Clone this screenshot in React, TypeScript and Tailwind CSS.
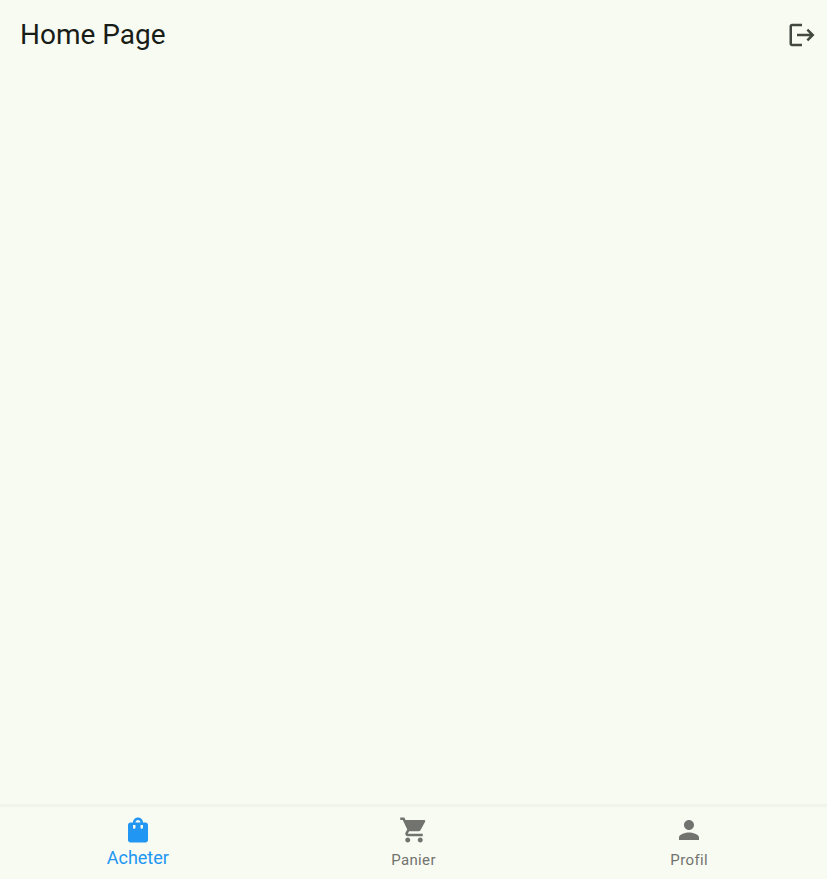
import React from "react";

type Tab = { id: string; label: string; path: string };

const tabs: Tab[] = [
  {
    id: "acheter",
    label: "Acheter",
    path: "M18 6h-2c0-2.210-1.790-4-4-4S8 3.790 8 6H6c-1.100 0-2 .9-2 2v12c0 1.100.9 2 2 2h12c1.100 0 2-.9 2-2V8c0-1.100-.9-2-2-2zm-8 4c0 .55-.45 1-1 1s-1-.45-1-1V8h2v2zm2-6c1.100 0 2 .9 2 2h-4c0-1.100.9-2 2-2zm4 6c0 .55-.45 1-1 1s-1-.45-1-1V8h2v2z",
  },
  {
    id: "panier",
    label: "Panier",
    path: "M7 18c-1.100 0-1.990.9-1.990 2S5.900 22 7 22s2-.9 2-2-.9-2-2-2zM1 2v2h2l3.600 7.590-1.350 2.450c-.16.28-.25.61-.25.960 0 1.100.9 2 2 2h12v-2H7.420c-.14 0-.25-.11-.25-.25l.03-.12.9-1.630h7.450c.75 0 1.410-.41 1.750-1.030l3.580-6.490c.08-.14.12-.31.12-.48 0-.55-.45-1-1-1H5.210l-.94-2H1zm16 16c-1.100 0-1.990.9-1.990 2s.89 2 1.990 2 2-.9 2-2-.9-2-2-2z",
  },
  {
    id: "profil",
    label: "Profil",
    path: "M12 12c2.210 0 4-1.790 4-4s-1.790-4-4-4-4 1.790-4 4 1.790 4 4 4zm0 2c-2.670 0-8 1.340-8 4v2h16v-2c0-2.660-5.330-4-8-4z",
  },
];

export default function App() {
  const [active, setActive] = React.useState("acheter");
  return (
    <div className="flex min-h-screen flex-col bg-[#f8fbf2] font-[Roboto,sans-serif]">
      <header className="flex h-[70px] items-center justify-between pr-[10px] pl-5">
        <h1 className="text-[28px] leading-9 text-[#191d17]">Home Page</h1>
        <button type="button" aria-label="Logout" className="text-[#424940]">
          <svg viewBox="0 0 24 24" className="size-[30px]" fill="currentColor">
            <path d="M17 7l-1.410 1.410L18.170 11H8v2h10.170l-2.580 2.580L17 17l5-5zM4 5h8V3H4c-1.100 0-2 .9-2 2v14c0 1.100.9 2 2 2h8v-2H4V5z" />
          </svg>
        </button>
      </header>
      <main className="flex-1" />
      <nav className="flex h-[75px] border-t-3 border-[#f1f4eb]">
        {tabs.map((t) => (
          <button
            key={t.id}
            type="button"
            onClick={() => setActive(t.id)}
            aria-current={active === t.id ? "page" : undefined}
            className={`flex flex-1 flex-col items-center pt-2 ${active === t.id ? "text-[#2196f3]" : "text-[#72736f]"}`}
          >
            <svg viewBox="0 0 24 24" className="size-[30px]" fill="currentColor">
              <path d={t.path} />
            </svg>
            <span className={active === t.id ? "text-[18px] leading-[26px]" : "text-[15px] leading-[30px] tracking-wide"}>
              {t.label}
            </span>
          </button>
        ))}
      </nav>
    </div>
  );
}
